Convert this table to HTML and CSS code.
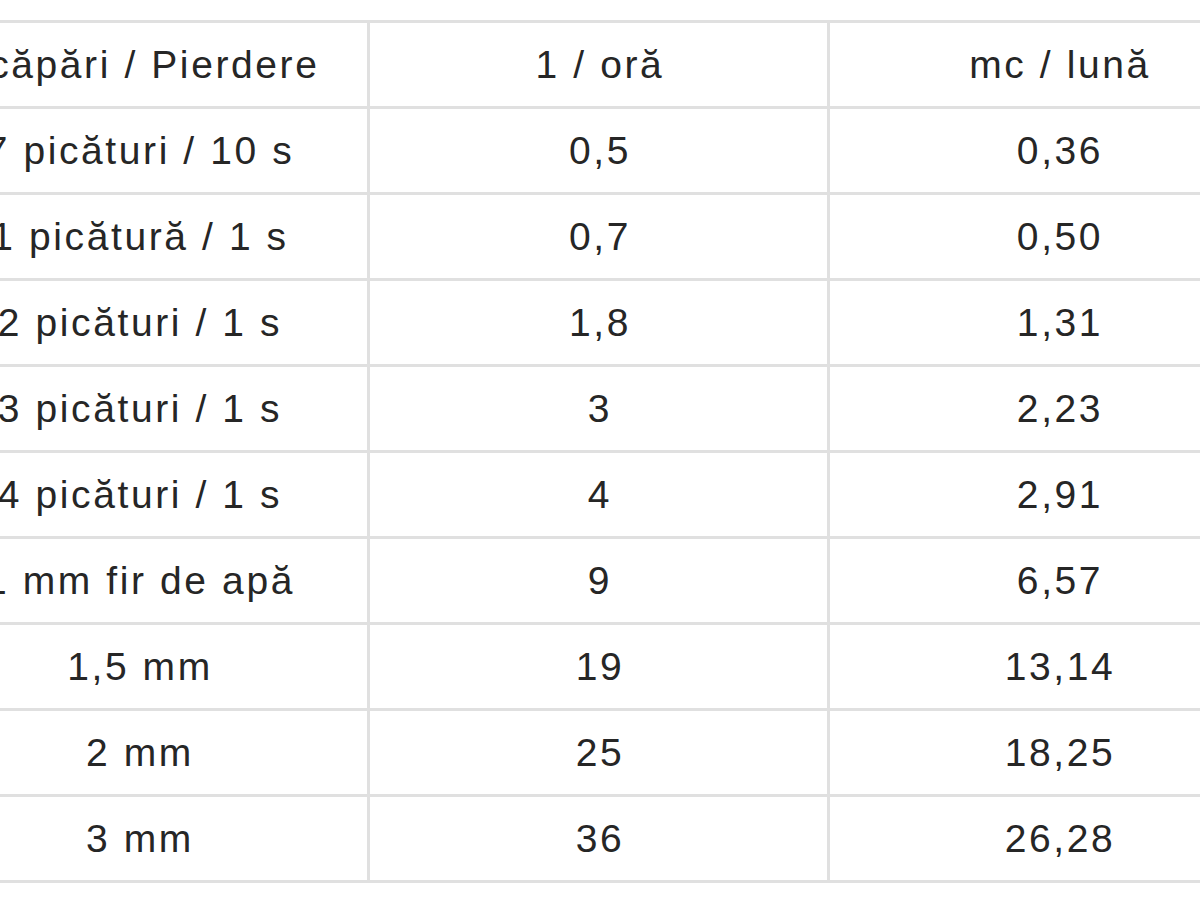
FILE: index.html
```html
<!DOCTYPE html>
<html lang="ro">
<head>
<meta charset="utf-8">
<title>Pierderi de apă</title>
<link rel="stylesheet" href="styles.css">
</head>
<body>
<div class="frame">
  <table class="leaks">
    <colgroup><col class="c"><col class="c"><col class="c"></colgroup>
    <tbody>
      <tr><td>Scăpări / Pierdere</td><td>1 / oră</td><td>mc / lună</td></tr>
      <tr><td>7 picături / 10 s</td><td>0,5</td><td>0,36</td></tr>
      <tr><td>1 picătură / 1 s</td><td>0,7</td><td>0,50</td></tr>
      <tr><td>2 picături / 1 s</td><td>1,8</td><td>1,31</td></tr>
      <tr><td>3 picături / 1 s</td><td>3</td><td>2,23</td></tr>
      <tr><td>4 picături / 1 s</td><td>4</td><td>2,91</td></tr>
      <tr><td>1 mm fir de apă</td><td>9</td><td>6,57</td></tr>
      <tr><td>1,5 mm</td><td>19</td><td>13,14</td></tr>
      <tr><td>2 mm</td><td>25</td><td>18,25</td></tr>
      <tr><td>3 mm</td><td>36</td><td>26,28</td></tr>
    </tbody>
  </table>
</div>
</body>
</html>
```
FILE: styles.css
```css
html, body {
  margin: 0;
  padding: 0;
  background: #ffffff;
}
.frame {
  width: 1200px;
  height: 900px;
  overflow: hidden;
  padding-top: 20px;
  box-sizing: border-box;
}
.leaks {
  border-collapse: collapse;
  table-layout: fixed;
  width: 1383px;
  margin-left: -93px;
  font-family: "Liberation Sans", Arial, sans-serif;
  font-size: 39px;
  letter-spacing: 2.6px;
  color: #262626;
}
.leaks .c {
  width: 460px;
}
.leaks td {
  border: 3px solid #e0e0e0;
  height: 83px;
  padding: 0 0 0 3px;
  text-align: center;
  vertical-align: middle;
  white-space: nowrap;
}
```
